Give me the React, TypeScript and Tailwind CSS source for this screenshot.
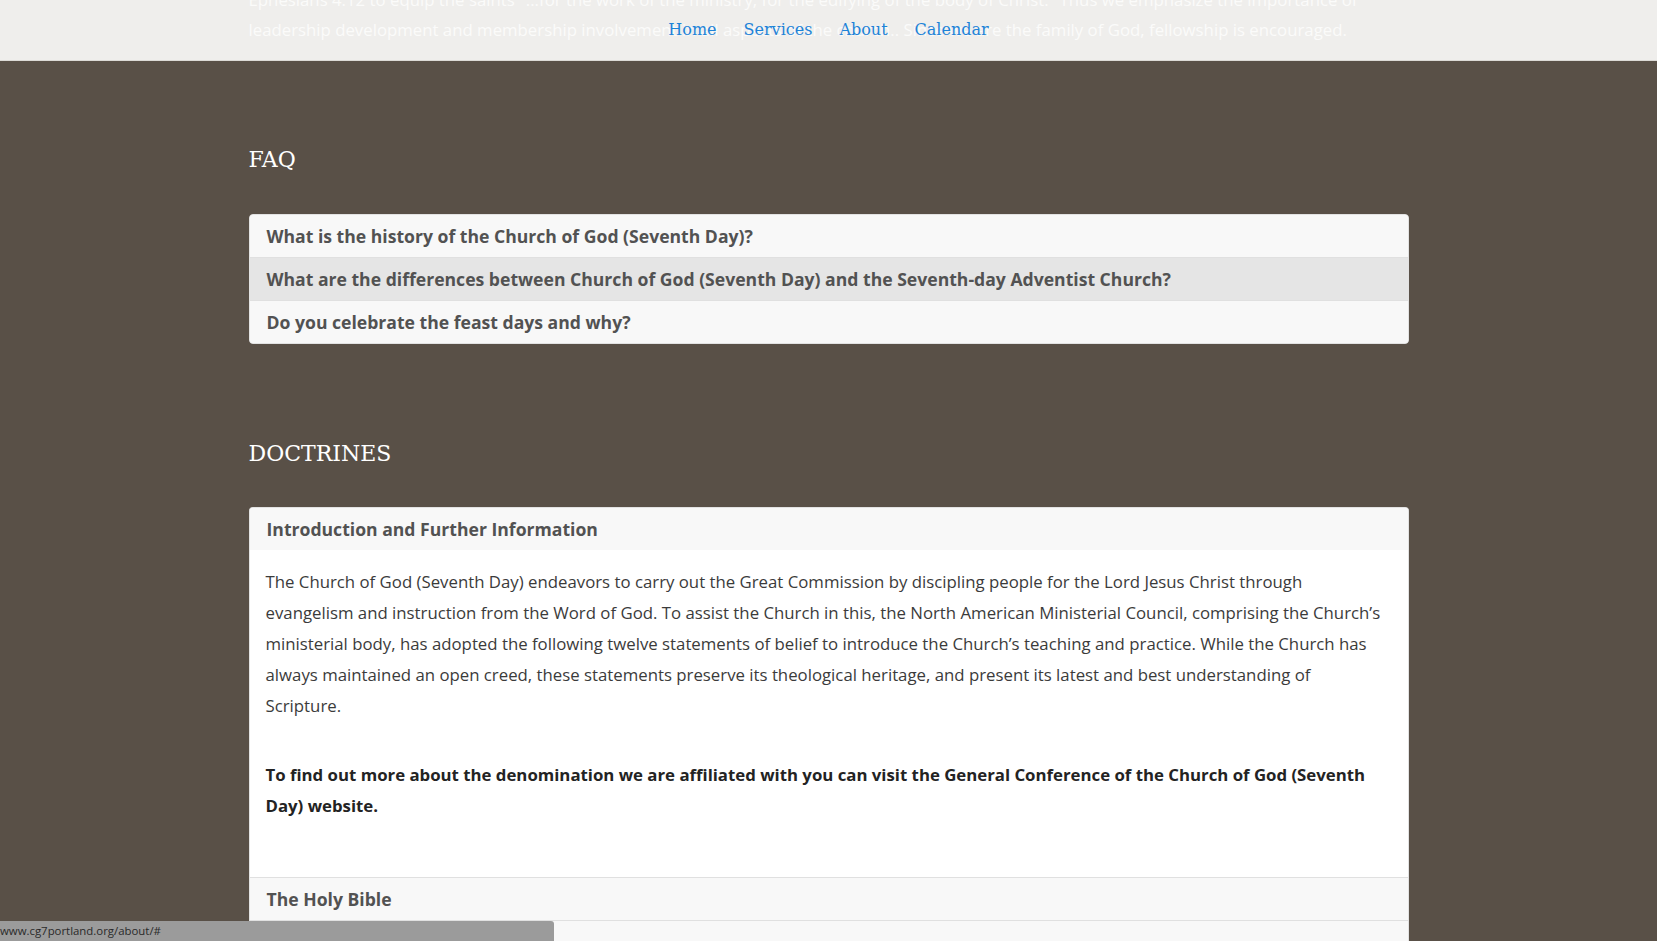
import React from "react";

const sans = { fontFamily: '"Open Sans", "Liberation Sans", sans-serif' };
const slab = { fontFamily: '"DejaVu Serif", "Liberation Serif", serif' };

const faqs = [
  "What is the history of the Church of God (Seventh Day)?",
  "What are the differences between Church of God (Seventh Day) and the Seventh-day Adventist Church?",
  "Do you celebrate the feast days and why?",
];

const Header = () => {
  return (
    <header className="relative h-[61px] overflow-hidden border-b border-[#dcdad6] bg-[#efeeec]">
      <div className="mx-auto -mt-[15px] w-[1160px] text-[16.8px] leading-[30px] text-[#fbfbfa]" style={sans}>
        Ephesians 4:12 to equip the saints "...for the work of the ministry, for the edifying of the body of Christ." Thus we emphasize the importance of
        leadership development and membership involvement in all aspects of the church.. Since we are the family of God, fellowship is encouraged.
      </div>
      <nav className="absolute inset-x-0 top-[18px] flex justify-center gap-[27px] text-[16px] leading-[24px] text-[#1e83d8]" style={slab}>
        <a href="#">Home</a>
        <a href="#">Services</a>
        <a href="#">About</a>
        <a href="#">Calendar</a>
      </nav>
    </header>
  );
};

const FaqList = () => {
  return (
    <div className="overflow-hidden rounded-[4px] border border-[#e2e2e2] bg-[#f8f8f8]">
      {faqs.map((q, i) => (
        <div
          key={q}
          className={
            "flex items-center px-[17px] text-[17.6px] font-bold text-[#525252] " +
            (i > 0 ? "h-[43px] border-t border-[#e0e0e0] " : "h-[42px] ") +
            (i === 1 ? "bg-[#e5e5e5]" : "bg-[#f8f8f8]")
          }
          style={sans}
        >
          {q}
        </div>
      ))}
    </div>
  );
};

const Doctrines = () => {
  return (
    <div className="overflow-hidden rounded-t-[4px] border border-b-0 border-[#e2e2e2] bg-white" style={sans}>
      <div className="flex h-[42px] items-center bg-[#f8f8f8] px-[17px] text-[17.6px] font-bold text-[#525252]">
        Introduction and Further Information
      </div>
      <div className="pt-4 pr-5 pb-[56px] pl-4 text-[16.8px] leading-[31px] text-[#3b3b3b]">
        <p>
          The Church of God (Seventh Day) endeavors to carry out the Great Commission by discipling people for the Lord Jesus Christ through
          evangelism and instruction from the Word of God. To assist the Church in this, the North American Ministerial Council, comprising the
          Church’s ministerial body, has adopted the following twelve statements of belief to introduce the Church’s teaching and practice. While
          the Church has always maintained an open creed, these statements preserve its theological heritage, and present its latest and best
          understanding of Scripture.
        </p>
        <p className="mt-[38px] font-bold text-[#232323]">
          To find out more about the denomination we are affiliated with you can visit the General Conference of the Church of God (Seventh Day)
          website.
        </p>
      </div>
      <div className="flex h-[43px] items-center border-t border-[#e0e0e0] bg-[#f8f8f8] px-[17px] text-[17.6px] font-bold text-[#525252]">
        The Holy Bible
      </div>
      <div className="flex h-[43px] items-center border-t border-[#e0e0e0] bg-[#f8f8f8] px-[17px] text-[17.6px] font-bold text-[#525252]">
        The Godhead
      </div>
    </div>
  );
};

export default function App() {
  return (
    <div className="relative h-[941px] overflow-hidden bg-[#595047]">
      <Header />
      <main className="mx-auto w-[1160px] pt-[86px]">
        <h2 className="text-[22px] leading-[26px] text-white" style={slab}>FAQ</h2>
        <div className="mt-[41px]">
          <FaqList />
        </div>
        <h2 className="mt-[97px] text-[22px] leading-[26px] text-white" style={slab}>DOCTRINES</h2>
        <div className="mt-[40px]">
          <Doctrines />
        </div>
      </main>
      <div
        className="absolute bottom-0 left-0 flex h-[20px] w-[554px] items-center rounded-tr-[3px] bg-[#9b9b9b] text-[11.4px] text-[#2a2a2a]"
        style={sans}
      >
        www.cg7portland.org/about/#
      </div>
    </div>
  );
}
